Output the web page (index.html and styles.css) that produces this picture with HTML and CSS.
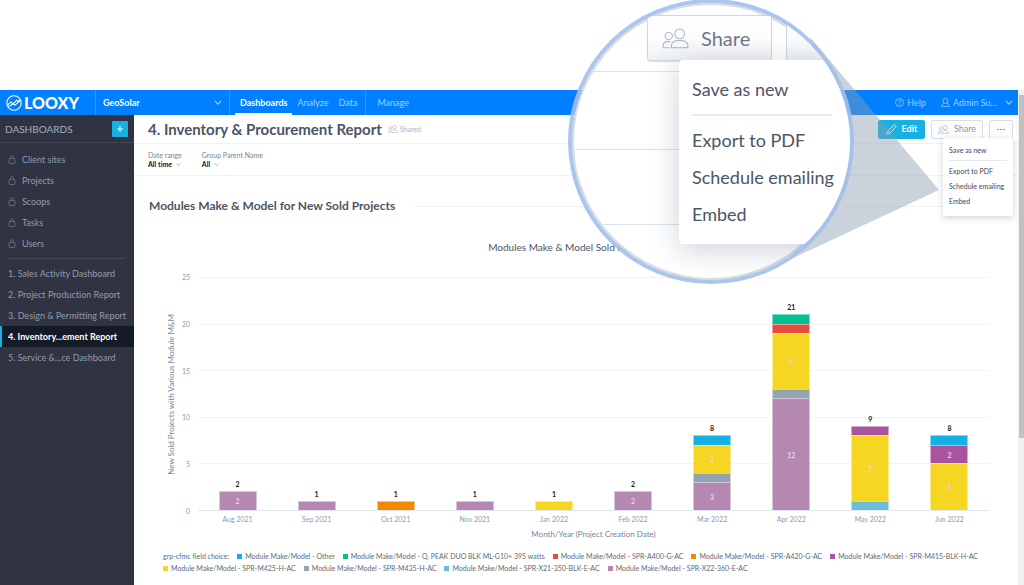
FILE: index.html
```html
<!DOCTYPE html>
<html lang="en">
<head>
<meta charset="utf-8">
<title>Inventory &amp; Procurement Report</title>
<link rel="stylesheet" href="styles.css">
</head>
<body>
<svg class="sprite" aria-hidden="true">
  <symbol id="lock" viewBox="0 0 16 18"><rect x="2" y="7" width="12" height="10" rx="2"/><path d="M5 7V4.5a3 3 0 0 1 6 0V7"/></symbol>
  <symbol id="people" viewBox="0 0 26 20"><circle cx="6.500" cy="7.500" r="3.500"/><path d="M7 19H1v-2c0-2.500 2-4 4.500-4H8"/><circle cx="17" cy="5.500" r="4.700"/><path d="M9 19v-2c0-3 3-5 8-5s8 2 8 5v2z"/></symbol>
  <symbol id="user" viewBox="0 0 18 18"><circle cx="9" cy="6" r="5"/><path d="M1 17c0-3 2-5 5-6M17 17c0-3-2-5-5-6M1 17h16"/></symbol>
  <symbol id="chevron" viewBox="0 0 10 6"><path d="M1 1l4 4 4-4"/></symbol>
  <symbol id="pencil" viewBox="0 0 22 22"><path d="M1.500 20.500l2-6.500L17 1.500 20.500 5 8 18.500zM3.500 14L8 18.500"/></symbol>
  <symbol id="help" viewBox="0 0 18 18"><circle cx="9" cy="9" r="8"/><path d="M6.500 7a2.500 2.500 0 1 1 3.500 2.300c-.8.400-1 .8-1 1.700M9 12.500v1.500"/></symbol>
</svg>

<div class="app">
  <header class="topbar">
    <a class="logo" href="#">
      <svg viewBox="0 0 30 30" aria-hidden="true"><circle cx="15" cy="15" r="13.500"/><path d="M3 19l6-6 4 4 7-7 2 2M8 21l5-5 4 3 9-8M4 22l3-2M22 12l4-3"/></svg>
      <span>LOOXY</span>
    </a>
    <button class="workspace" type="button">GeoSolar <svg class="chev"><use href="#chevron"/></svg></button>
    <nav class="nav">
      <a class="current" href="#">Dashboards</a>
      <a href="#">Analyze</a>
      <a href="#">Data</a>
      <a class="manage" href="#">Manage</a>
    </nav>
    <div class="account">
      <a href="#"><svg class="ico9"><use href="#help"/></svg>Help</a>
      <button type="button"><svg class="ico9"><use href="#user"/></svg>Admin Su... <svg class="chev"><use href="#chevron"/></svg></button>
    </div>
  </header>

  <div class="body">
    <aside class="sidebar">
      <div class="side-head"><span>DASHBOARDS</span><button type="button" aria-label="Add dashboard"><svg viewBox="0 0 8 8"><path d="M4 1v6M1 4h6"/></svg></button></div>
      <ul class="side-list locked">
        <li><a href="#"><svg><use href="#lock"/></svg>Client sites</a></li>
        <li><a href="#"><svg><use href="#lock"/></svg>Projects</a></li>
        <li><a href="#"><svg><use href="#lock"/></svg>Scoops</a></li>
        <li><a href="#"><svg><use href="#lock"/></svg>Tasks</a></li>
        <li><a href="#"><svg><use href="#lock"/></svg>Users</a></li>
      </ul>
      <ul class="side-list reports">
        <li><a href="#">1. Sales Activity Dashboard</a></li>
        <li><a href="#">2. Project Production Report</a></li>
        <li><a href="#">3. Design &amp; Permitting Report</a></li>
        <li><a class="current" href="#">4. Inventory...ement Report</a></li>
        <li><a href="#">5. Service &amp;...ce Dashboard</a></li>
      </ul>
    </aside>

    <main class="main">
      <div class="title-row">
        <h1>4. Inventory &amp; Procurement Report</h1>
        <span class="shared"><svg><use href="#people"/></svg>Shared</span>
        <div class="actions">
          <button class="btn edit" type="button"><svg><use href="#pencil"/></svg>Edit</button>
          <button class="btn share" type="button"><svg><use href="#people"/></svg>Share</button>
          <div class="more">
            <button class="btn dots" type="button" aria-label="More"><i></i><i></i><i></i></button>
            <div class="menu">
              <a href="#">Save as new</a>
              <hr>
              <a href="#">Export to PDF</a>
              <a href="#">Schedule emailing</a>
              <a href="#">Embed</a>
            </div>
          </div>
        </div>
      </div>
      <div class="filters">
        <div><span>Date range</span><button type="button">All time <svg><use href="#chevron"/></svg></button></div>
        <div><span>Group Parent Name</span><button type="button">All <svg><use href="#chevron"/></svg></button></div>
      </div>
      <div class="section-head"><h2>Modules Make &amp; Model for New Sold Projects</h2></div>

      <section class="chart">
        <h3>Modules Make &amp; Model Sold Per Month</h3>
        <div class="chart-grid">
          <div class="y-title"><span>New Sold Projects with Various Module M&amp;M</span></div>
          <div class="y-axis"><span>25</span><span>20</span><span>15</span><span>10</span><span>5</span><span>0</span></div>
          <div class="plot">
            <div class="lines"><i></i><i></i><i></i><i></i><i></i><i></i></div>
            <div class="bars">
              <div class="bar"><b>2</b><i class="plum" style="--n:2">2</i></div>
              <div class="bar"><b>1</b><i class="plum" style="--n:1"></i></div>
              <div class="bar"><b>1</b><i class="orange" style="--n:1"></i></div>
              <div class="bar"><b>1</b><i class="plum" style="--n:1"></i></div>
              <div class="bar"><b>1</b><i class="yellow" style="--n:1"></i></div>
              <div class="bar"><b>2</b><i class="plum" style="--n:2">2</i></div>
              <div class="bar"><b>8</b><i class="blue" style="--n:1"></i><i class="yellow" style="--n:3">3</i><i class="slate" style="--n:1"></i><i class="plum" style="--n:3">3</i></div>
              <div class="bar"><b>21</b><i class="green" style="--n:1"></i><i class="red" style="--n:1"></i><i class="yellow" style="--n:6">6</i><i class="slate" style="--n:1"></i><i class="plum" style="--n:12">12</i></div>
              <div class="bar"><b>9</b><i class="purple" style="--n:1"></i><i class="yellow" style="--n:7">7</i><i class="sky" style="--n:1"></i></div>
              <div class="bar"><b>8</b><i class="blue" style="--n:1"></i><i class="purple" style="--n:2">2</i><i class="yellow" style="--n:5">5</i></div>
            </div>
          </div>
          <div class="x-axis"><span>Aug 2021</span><span>Sep 2021</span><span>Oct 2021</span><span>Nov 2021</span><span>Jan 2022</span><span>Feb 2022</span><span>Mar 2022</span><span>Apr 2022</span><span>May 2022</span><span>Jun 2022</span></div>
          <div class="x-title">Month/Year (Project Creation Date)</div>
        </div>
        <div class="legend">
          <span>grp-cfmc field choice:</span>
          <span><i class="blue"></i>Module Make/Model - Other</span>
          <span><i class="green"></i>Module Make/Model - Q. PEAK DUO BLK ML-G10+ 395 watts</span>
          <span><i class="red"></i>Module Make/Model - SPR-A400-G-AC</span>
          <span><i class="orange"></i>Module Make/Model - SPR-A420-G-AC</span>
          <span><i class="purple"></i>Module Make/Model - SPR-M415-BLK-H-AC</span>
          <span><i class="yellow"></i>Module Make/Model - SPR-M425-H-AC</span>
          <span><i class="slate"></i>Module Make/Model - SPR-M435-H-AC</span>
          <span><i class="sky"></i>Module Make/Model - SPR-X21-350-BLK-E-AC</span>
          <span><i class="plum"></i>Module Make/Model - SPR-X22-360-E-AC</span>
        </div>
      </section>
    </main>
  </div>
  <div class="scrollbar"><i></i></div>
</div>

<svg class="cone" viewBox="0 0 156 226" aria-hidden="true"><path d="M27 2L155 154 7 223z"/></svg>
<div class="lens">
  <div class="lens-toolbar">
    <button class="lens-share" type="button"><svg><use href="#people"/></svg>Share</button>
    <span class="lens-next"></span>
  </div>
  <div class="lens-lines"><i></i><i></i><i></i></div>
  <div class="lens-menu">
    <a href="#">Save as new</a>
    <hr>
    <a href="#">Export to PDF</a>
    <a href="#">Schedule emailing</a>
    <a href="#">Embed</a>
  </div>
</div>
</body>
</html>
```

FILE: styles.css
```css
* { box-sizing: border-box; }
body {
  margin: 0;
  position: relative;
  min-height: 100vh;
  padding-top: 90px;
  overflow: hidden;
  background: #fff;
  color: #4c5564;
  font: 9px/12px Lato, "Open Sans", sans-serif;
  font-variant-ligatures: none;
}
a { color: inherit; text-decoration: none; }
button { font: inherit; color: inherit; background: none; border: 0; padding: 0; display: flex; align-items: center; cursor: pointer; }
h1, h2, h3, ul { margin: 0; padding: 0; }
ul { list-style: none; }
svg { fill: none; stroke: currentColor; stroke-width: 1.5; flex: none; }
.sprite { position: absolute; width: 0; height: 0; }

.app {
  display: grid;
  grid-template: auto 1fr / 1fr 6px;
  min-height: calc(100vh - 90px);
}
.scrollbar { grid-area: 1 / 2 / 3 / 3; background: #f1f1f1; padding: 5px 0 0 1px; }
.scrollbar i { display: block; height: 70%; background: #c1c1c1; }

/* Top bar */
.topbar { display: flex; height: 25px; background: #007fff; color: #9fd0ff; }
.logo { display: flex; align-items: center; gap: 2px; width: 95px; padding-left: 6px; color: #fff; font-size: 16px; font-weight: 900; }
.logo svg { width: 16px; height: 16px; stroke-width: 2; }
.workspace { width: 135px; padding: 0 7px; justify-content: space-between; border: solid #3299ff; border-width: 0 1px; color: #fff; font-size: 9px; font-weight: 700; }
.chev { width: 8px; height: 5px; color: #9fd0ff; }
.nav { display: flex; padding-left: 5px; }
.nav a { display: flex; align-items: center; padding: 0 5px; }
.nav .current { border-bottom: 2px solid #fff; padding-top: 2px; color: #fff; font-weight: 700; }
.nav .manage { margin-left: 3px; padding-left: 11px; border-left: 1px solid #3299ff; }
.account { display: flex; gap: 15px; margin-left: auto; padding-right: 5px; }
.account a, .account button { display: flex; align-items: center; gap: 3px; }
.account .chev { margin-left: 5px; }
.ico9 { width: 9px; height: 9px; }

/* Sidebar */
.body { display: flex; }
.sidebar { flex: none; width: 134px; background: #303342; color: #929bab; }
.side-head { display: flex; align-items: center; justify-content: space-between; height: 28px; padding: 0 6px 0 5px; border-bottom: 1px solid #3f4352; font-size: 10px; color: #a5aebc; }
.side-head button { width: 16px; height: 16px; justify-content: center; background: #17b0e2; color: #fff; border-radius: 1px; }
.side-head svg { width: 8px; height: 8px; stroke-width: 1; }
.side-list a { display: flex; align-items: center; height: 21px; padding-left: 8px; gap: 6px; white-space: nowrap; }
.side-list svg { width: 8px; height: 9px; color: #737b8b; }
.locked { padding: 6px 0 4px; }
.reports::before { content: ""; display: block; height: 1px; margin: 0 9px 4px 8px; background: #434756; }
.side-list .current { padding-left: 6px; border-left: 2px solid #17b0e2; background: #151a27; color: #fff; font-weight: 700; }

/* Page heading and filters */
.main { flex: 1; min-width: 0; }
.title-row { display: flex; align-items: center; height: 29px; padding: 0 5px 0 14px; border-bottom: 1px solid #eef1f4; }
h1 { font-size: 15px; line-height: 20px; font-weight: 700; white-space: nowrap; }
.shared { display: flex; align-items: center; gap: 2px; margin-left: 6px; font-size: 7px; color: #a9b3c0; }
.shared svg { width: 10px; height: 8px; }
.actions { display: flex; gap: 6px; margin-left: auto; }
.btn { height: 19px; justify-content: center; border: 1px solid #d5dee8; border-radius: 2px; background: #fcfdfe; color: #8b97a8; }
.edit { width: 47px; gap: 5px; border-color: #17b0e2; background: #17b0e2; color: #fff; font-weight: 700; }
.edit svg { width: 11px; height: 11px; }
.share { width: 52px; gap: 5px; }
.share svg { width: 11px; height: 9px; color: #a4b5c9; }
.dots { width: 24px; gap: 1px; }
.dots i { width: 2px; height: 1px; background: #8b97a8; }
.more { position: relative; }
.menu { position: absolute; z-index: 5; top: 18px; right: 0; width: 70px; padding: 7px 6px; background: #fff; border-radius: 2px; box-shadow: 0 2px 6px rgba(60, 80, 110, .25); font-size: 7px; color: #3f4755; }
.menu a { display: block; white-space: nowrap; line-height: 15px; }
.menu a:first-child { line-height: 10px; }
.menu hr { height: 1px; margin: 5px 0 3px; border: 0; background: #e4e9ef; }
.filters { display: flex; gap: 20px; height: 32px; padding: 7px 14px 0; border-bottom: 1px solid #eef1f4; font-size: 7px; line-height: 9px; color: #7a8492; }
.filters button { gap: 4px; font-weight: 700; color: #111; }
.filters svg { width: 5px; height: 3px; color: #8b97a8; }
.section-head { display: flex; align-items: center; gap: 20px; padding: 21px 28px 20px 15px; }
.section-head::after { content: ""; flex: 1; height: 1px; background: #f0f2f5; }
h2 { font-size: 12px; line-height: 18px; font-weight: 700; }

/* Chart */
.chart { padding: 6px 29px 0; }
h3 { margin-bottom: 24px; text-align: center; font-size: 10px; line-height: 12px; font-weight: 400; }
.chart-grid { display: grid; grid-template-columns: 16px 19px 1fr; grid-template-rows: 234px 16px 15px; font-size: 8px; color: #7a8492; }
.y-title { display: flex; align-items: center; justify-content: center; }
.y-title span { writing-mode: vertical-rl; transform: rotate(180deg); line-height: 12px; white-space: nowrap; }
.y-axis { display: flex; flex-direction: column; justify-content: space-between; margin: -5px 8px -5px 0; text-align: right; font-size: 7px; line-height: 10px; color: #8f9bab; }
.plot { display: grid; }
.lines, .bars { grid-area: 1 / 1; }
.lines { display: flex; flex-direction: column; justify-content: space-between; }
.lines i { height: 1px; background: #f1f3f5; }
.lines i:last-child { background: #dfe6ef; }
.bars { display: grid; grid-template-columns: repeat(10, 1fr); padding-bottom: 1px; }
.bar { display: flex; flex-direction: column; justify-content: flex-end; height: 233px; padding: 0 26%; font-size: 7px; line-height: 10px; text-align: center; }
.bar b { margin-bottom: 2px; color: #222; }
.bar i { display: flex; flex: none; align-items: center; justify-content: center; height: calc(var(--n) * 4%); border: solid rgba(255, 255, 255, .5); border-width: 1px 1px 0; color: #dcdcdc; font-style: normal; font-weight: 700; }
.x-axis { grid-column: 3; display: grid; grid-template-columns: repeat(10, 1fr); align-items: center; text-align: center; font-size: 7px; line-height: 10px; color: #8f9bab; }
.x-title { grid-column: 3; text-align: center; line-height: 15px; }
.legend { display: flex; flex-wrap: wrap; gap: 0 8px; margin: 8px -20px 0 0; font-size: 7px; line-height: 12px; color: #5f6976; }
.legend span { display: flex; align-items: center; gap: 3px; white-space: nowrap; }
.legend i { width: 5px; height: 5px; }
.blue { background: #17b0e2; }
.green { background: #00c18f; }
.red { background: #e74c41; }
.orange { background: #f28a00; }
.purple { background: #aa54a0; }
.yellow { background: #f4d623; }
.slate { background: #94a3b1; }
.sky { background: #6bbdd9; }
.plum { background: #b488b1; }

/* Magnifier */
.cone { position: absolute; top: 36px; right: 84px; width: 156px; height: 226px; fill: rgba(138, 157, 177, .45); stroke: none; }
.lens { position: absolute; top: -1px; right: 170px; width: 286px; height: 285px; border: 4px solid rgba(163, 191, 234, .9); border-radius: 50%; overflow: hidden; background: #fff padding-box; box-shadow: inset 0 0 0 2px #d8dde2; }
.lens-toolbar { display: flex; gap: 14px; padding: 12px 0 0 75px; height: 58px; }
.lens-share, .lens-next { flex: none; height: 46px; border: 1px solid #ccd8e4; border-radius: 3px; background: linear-gradient(#fdfdfe 50%, #eff1f5); box-shadow: 0 1px 1px #dae2eb; }
.lens-share { width: 125px; gap: 12px; padding: 0 0 0 14px; font-size: 20px; color: #6e7a8b; }
.lens-share svg { width: 27px; height: 21px; stroke-width: 1; color: #a4b5c9; }
.lens-next { width: 80px; }
.lens-lines { display: grid; grid-template-rows: 11px 78px 75px; height: 164px; }
.lens-lines i { border-bottom: 1px solid #d9e2ec; }
.lens-menu { position: absolute; top: 57px; left: 107px; width: 190px; height: 184px; padding: 17px 13px; border-radius: 4px; background: #fff; box-shadow: 0 6px 30px rgba(70, 90, 120, .28); font-size: 18px; line-height: 24px; color: #4c5564; }
.lens-menu a { display: block; margin-bottom: 13px; }
.lens-menu hr { width: 140px; height: 2px; margin: 0 0 12px; border: 0; background: #e6ecf2; }
```
